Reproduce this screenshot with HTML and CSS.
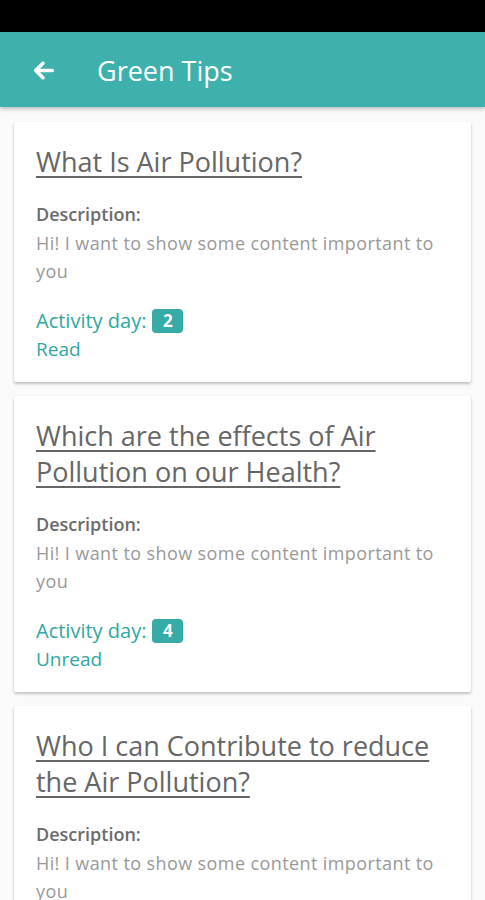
FILE: index.html
```html
<!DOCTYPE html>
<html lang="en">
<head>
<meta charset="utf-8">
<title>Green Tips</title>
<link rel="stylesheet" href="styles.css">
</head>
<body>
<div class="statusbar"></div>
<header class="appbar">
  <svg class="back" viewBox="0 0 24 24" aria-hidden="true">
    <path d="M20.5 12H4.5M11.5 5l-7 7 7 7" fill="none" stroke="#fff" stroke-width="3.4" stroke-linecap="round" stroke-linejoin="round"/>
  </svg>
  <h1 class="appbar-title">Green Tips</h1>
</header>
<main class="list">
  <article class="card">
    <h2 class="card-title">What Is Air Pollution?</h2>
    <div class="desc-label">Description:</div>
    <p class="desc">Hi! I want to show some content important to you</p>
    <div class="activity">Activity day: <span class="badge">2</span></div>
    <div class="status">Read</div>
  </article>
  <article class="card">
    <h2 class="card-title">Which are the effects of Air Pollution on our Health?</h2>
    <div class="desc-label">Description:</div>
    <p class="desc">Hi! I want to show some content important to you</p>
    <div class="activity">Activity day: <span class="badge">4</span></div>
    <div class="status">Unread</div>
  </article>
  <article class="card">
    <h2 class="card-title">Who I can Contribute to reduce the Air Pollution?</h2>
    <div class="desc-label">Description:</div>
    <p class="desc">Hi! I want to show some content important to you</p>
  </article>
</main>
</body>
</html>
```
FILE: styles.css
```css
* { box-sizing: border-box; }
html, body {
  margin: 0;
  padding: 0;
  background: #fafafa;
  font-family: "Open Sans", "Noto Sans", sans-serif;
  overflow: hidden;
  height: 900px;
}
.statusbar {
  height: 32px;
  background: #000;
}
.appbar {
  height: 75px;
  background: #3eb1ad;
  display: flex;
  align-items: center;
  padding-left: 31px;
  box-shadow: 0 2px 4px rgba(0,0,0,0.25);
  position: relative;
  z-index: 1;
}
.back {
  width: 25px;
  height: 25px;
  margin-top: 2px;
}
.appbar-title {
  margin: 2px 0 0 41px;
  font-weight: 400;
  font-size: 27px;
  color: #fff;
  line-height: 1;
}
.list {
  padding: 15px 14px 0 14px;
  display: flex;
  flex-direction: column;
  gap: 14px;
}
.card {
  background: #fff;
  padding: 22px 22px 19px 22px;
  box-shadow: 0 2px 3px rgba(0,0,0,0.22), 0 0 2px rgba(0,0,0,0.06);
  border-radius: 2px;
}
.card-title {
  margin: 0;
  font-size: 27px;
  line-height: 36px;
  font-weight: 400;
  color: #666;
  text-decoration: underline;
  text-decoration-thickness: 2px;
  text-underline-offset: 4px;
}
.desc-label {
  margin-top: 20px;
  font-size: 18px;
  line-height: 28px;
  font-weight: 600;
  color: #6b6b6b;
}
.desc {
  margin: 1px 0 0 0;
  font-size: 18px;
  line-height: 28px;
  letter-spacing: 0.4px;
  color: #999;
}
.activity {
  margin-top: 22px;
  font-size: 20px;
  line-height: 28px;
  color: #2fa7a3;
  display: flex;
  align-items: center;
  gap: 6px;
}
.badge {
  display: inline-flex;
  align-items: center;
  justify-content: center;
  width: 31px;
  height: 24px;
  background: #36aba7;
  color: #fff;
  font-weight: 700;
  font-size: 17px;
  border-radius: 4px;
}
.status {
  font-size: 19px;
  line-height: 28px;
  color: #2fa7a3;
}
```
